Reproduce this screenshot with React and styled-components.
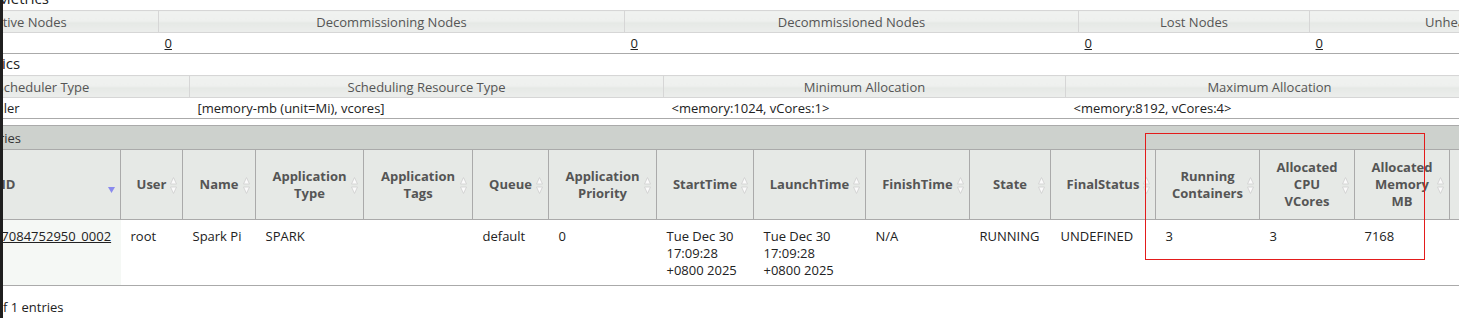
import React from "react";
import styled, { createGlobalStyle } from "styled-components";

const nodeCols = [262, 466, 454, 231, 336, 300, 300];
const nodeHeads = [
  "Active Nodes",
  "Decommissioning Nodes",
  "Decommissioned Nodes",
  "Lost Nodes",
  "Unhealthy Nodes",
  "Rebooted Nodes",
  "Shutdown Nodes",
];
const nodeValues = ["1", "0", "0", "0", "0", "0", "0"];

const schedCols = [293, 474, 402, 408];
const schedHeads = [
  "Scheduler Type",
  "Scheduling Resource Type",
  "Minimum Allocation",
  "Maximum Allocation",
];
const schedValues = [
  "Capacity Scheduler",
  "[memory-mb (unit=Mi), vcores]",
  "<memory:1024, vCores:1>",
  "<memory:8192, vCores:4>",
];

const appCols = [224, 62, 73, 108, 109, 76, 108, 97, 112, 104, 81, 105, 104, 95, 95, 110];
const appHeads = [
  "ID",
  "User",
  "Name",
  "Application Type",
  "Application Tags",
  "Queue",
  "Application Priority",
  "StartTime",
  "LaunchTime",
  "FinishTime",
  "State",
  "FinalStatus",
  "Running Containers",
  "Allocated CPU VCores",
  "Allocated Memory MB",
  "Allocated GPUs",
];

const app = {
  id: "application_1767084752950_0002",
  cells: [
    "root",
    "Spark Pi",
    "SPARK",
    "",
    "default",
    "0",
    ["Tue Dec 30", "17:09:28", "+0800 2025"],
    ["Tue Dec 30", "17:09:28", "+0800 2025"],
    "N/A",
    "RUNNING",
    "UNDEFINED",
    "3",
    "3",
    "7168",
    "0",
  ],
};

const SortIcon = ({ active }) => (
  <SortMark width="7" height="17" viewBox="0 0 7 17">
    {active ? (
      <polygon points="0,10 7,10 3.5,16" fill="#8a8aee" />
    ) : (
      <g fill="#fbfbfb" stroke="#d2d2d2" strokeWidth="0.9">
        <polygon points="3.5,0.5 6.5,7 0.5,7" />
        <polygon points="0.5,10 6.5,10 3.5,16.5" />
      </g>
    )}
  </SortMark>
);

const MetricsTable = ({ cols, heads, values, link, last, pad }) => (
  <Grid $w={cols.reduce((a, b) => a + b, 0)} $last={last}>
    <colgroup>
      {cols.map((w, i) => (
        <Col key={i} $w={w} />
      ))}
    </colgroup>
    <thead>
      <tr>
        {heads.map((h) => (
          <MetricsHead key={h}>{h}</MetricsHead>
        ))}
      </tr>
    </thead>
    <tbody>
      <tr>
        {values.map((v, i) => (
          <MetricsCell key={i} $pad={pad}>
            {link ? <Link>{v}</Link> : v}
          </MetricsCell>
        ))}
      </tr>
    </tbody>
  </Grid>
);

export default function App() {
  return (
    <Root>
      <GlobalStyle />
      <Edge />
      <Viewport>
        <Canvas>
          <Heading>Cluster Nodes Metrics</Heading>
          <MetricsTable cols={nodeCols} heads={nodeHeads} values={nodeValues} link pad={6} />
          <Heading>Scheduler Metrics</Heading>
          <MetricsTable cols={schedCols} heads={schedHeads} values={schedValues} last pad={8} />

          <Toolbar>
            Show <Select>20 ▾</Select> entries
          </Toolbar>
          <AppTable $w={appCols.reduce((a, b) => a + b, 0)}>
            <colgroup>
              {appCols.map((w, i) => (
                <Col key={i} $w={w} />
              ))}
            </colgroup>
            <thead>
              <tr>
                {appHeads.map((h, i) => (
                  <AppHead key={h}>
                    {h}
                    <SortIcon active={i === 0} />
                  </AppHead>
                ))}
              </tr>
            </thead>
            <tbody>
              <tr>
                <AppCell $sorted>
                  <Link>{app.id}</Link>
                </AppCell>
                {app.cells.map((c, i) => (
                  <AppCell key={i}>
                    {Array.isArray(c) ? c.map((line) => <Line key={line}>{line}</Line>) : c}
                  </AppCell>
                ))}
              </tr>
            </tbody>
          </AppTable>
          <Footer>Showing 1 to 1 of 1 entries</Footer>
        </Canvas>
      </Viewport>
      <Highlight />
    </Root>
  );
}

const GlobalStyle = createGlobalStyle`
  html, body {
    margin: 0;
    padding: 0;
    background: #fff;
    overflow: hidden;
  }
  body {
    font-family: "Open Sans", "Noto Sans", sans-serif;
    font-size: 13px;
    color: #222;
  }
`;

const Root = styled.div`
  position: relative;
  display: flex;
  width: 1459px;
  height: 318px;
  overflow: hidden;
`;

const Edge = styled.div`
  flex: 0 0 3px;
  background: #1f1f1f;
`;

const Viewport = styled.div`
  flex: 1;
  overflow: hidden;
`;

const Canvas = styled.div`
  margin: -11px 0 0 -107px;
  width: 2200px;
`;

const Heading = styled.h3`
  margin: 0 0 3px -1px;
  font-size: 15px;
  line-height: 18px;
  font-weight: normal;
  color: #222;
`;

const Grid = styled.table`
  table-layout: fixed;
  border-collapse: collapse;
  width: ${(p) => p.$w}px;
  border-bottom: 1px solid #aaa;
  margin-bottom: ${(p) => (p.$last ? 6 : 0)}px;
`;

const Col = styled.col`
  width: ${(p) => p.$w}px;
`;

const MetricsHead = styled.th`
  height: 21px;
  padding: 0 10px;
  font-weight: normal;
  color: #555;
  text-align: center;
  white-space: nowrap;
  overflow: hidden;
  background: linear-gradient(#f0f2f0 0%, #eef0ee 45%, #e6e9e6 55%, #eceeec 100%);
  border: 1px solid #d6d6d6;
`;

const MetricsCell = styled.td`
  height: 20px;
  padding: 0 ${(p) => p.$pad}px;
  white-space: nowrap;
  overflow: hidden;
`;

const Link = styled.a`
  color: #222;
  text-decoration: underline;
`;

const Toolbar = styled.div`
  display: flex;
  align-items: center;
  gap: 4px;
  height: 23px;
  padding-left: 0;
  border-top: 1px solid #aaa;
  background: #cdd1cd;
  color: #333;
`;

const Select = styled.span`
  display: inline-block;
  width: 34px;
  padding: 0 3px;
  border: 1px solid #999;
  background: #fff;
  font-size: 12px;
`;

const AppTable = styled.table`
  table-layout: fixed;
  border-collapse: collapse;
  width: ${(p) => p.$w}px;
  border-bottom: 1px solid #aaa;
`;

const AppHead = styled.th`
  position: relative;
  height: 69px;
  padding: 0 14px;
  background: #e6e9e6;
  border-top: 1px solid #aaa;
  border-bottom: 1px solid #aaa;
  border-left: 1px solid #aaa;
  color: #555;
  font-weight: bold;
  line-height: 17px;
  text-align: center;
  overflow: hidden;
`;

const SortMark = styled.svg`
  position: absolute;
  right: 5px;
  top: 50%;
  margin-top: -8px;
`;

const AppCell = styled.td`
  padding: 8px 10px 6px;
  height: 51px;
  vertical-align: top;
  line-height: 17px;
  white-space: nowrap;
  overflow: hidden;
  text-align: ${(p) => (p.$sorted ? "right" : "left")};
  background: ${(p) => (p.$sorted ? "#f5f8f5" : "#fff")};
`;

const Line = styled.div``;

const Footer = styled.div`
  padding: 12px 0 0 7px;
  line-height: 18px;
`;

const Highlight = styled.div`
  position: absolute;
  left: 1145px;
  top: 133px;
  width: 278px;
  height: 125px;
  border: 1px solid #e31b1b;
`;
